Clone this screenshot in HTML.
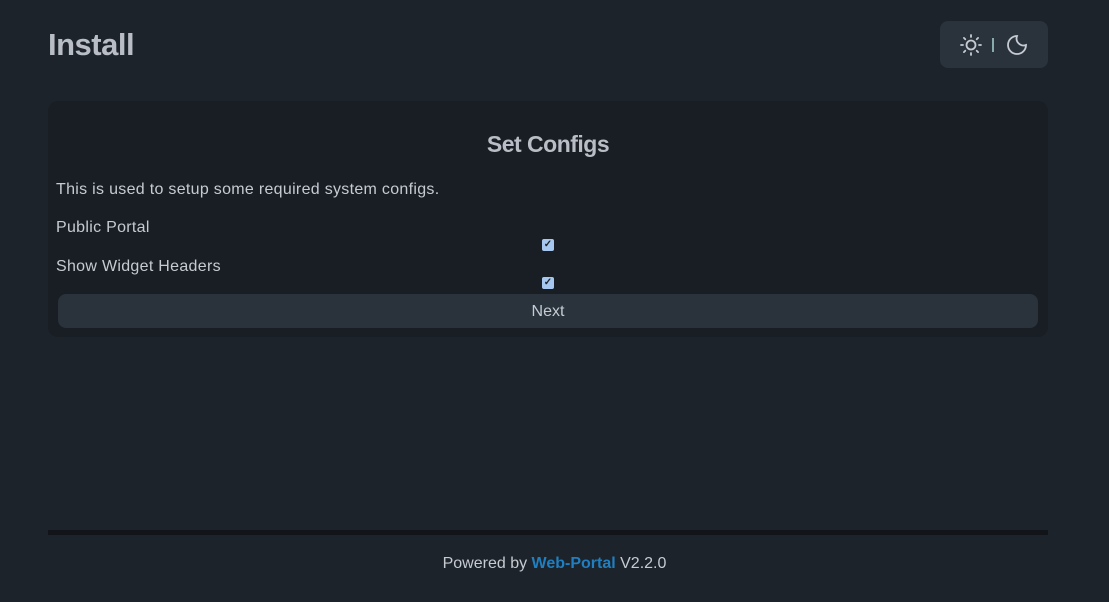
<!DOCTYPE html>
<html><head><style>
body{margin:0;background:#1d232a;width:1109px;height:602px;overflow:hidden;font-family:"Liberation Sans",sans-serif;color:#c6cbd2;position:relative}
h1{position:absolute;left:48px;top:27px;margin:0;font-size:31px;font-weight:bold;color:#b9bec6;letter-spacing:-0.5px}
.tog{position:absolute;left:940px;top:21px;width:108px;height:47px;background:#2a323c;border-radius:8px}
.card{position:absolute;left:48px;top:101px;width:1000px;height:236px;background:#191e24;border-radius:10px}
.t{position:absolute;left:0;width:1000px;text-align:center;top:30px;font-size:23px;font-weight:bold;color:#b9bec6;letter-spacing:-0.5px}
.p{position:absolute;left:8px;font-size:16px;color:#c6cbd2;letter-spacing:0.3px}
.cb{position:absolute;left:494px;width:12px;height:12px;background:#a6c8f0;border-radius:2px;color:#1d232a;font-size:10px;line-height:12px;text-align:center;font-weight:bold}
.btn{position:absolute;left:10px;top:193px;width:980px;height:34px;background:#2a323c;border-radius:8px;text-align:center;line-height:36px;font-size:16px;color:#c6cbd2}
.hr{position:absolute;left:48px;top:530px;width:1000px;height:5px;background:#111418}
.f{position:absolute;top:555px;left:0;width:1109px;text-align:center;font-size:16px;color:#c6cbd2}
</style></head><body>
<h1>Install</h1>
<div class="tog">
<svg style="position:absolute;left:19px;top:12px" width="24" height="24" viewBox="0 0 24 24" fill="none" stroke="#c6cbd2" stroke-width="1.8" stroke-linecap="round"><circle cx="12" cy="12" r="4.5"/><path d="M12 2v2M12 20v2M2 12h2M20 12h2M4.9 4.9l1.4 1.4M17.7 17.7l1.4 1.4M4.9 19.1l1.4-1.4M17.7 6.3l1.4-1.4"/></svg>
<div style="position:absolute;left:52px;top:17px;width:2px;height:14px;background:#8aa"></div>
<svg style="position:absolute;left:65px;top:12px" width="24" height="24" viewBox="0 0 24 24" fill="none" stroke="#c6cbd2" stroke-width="1.8"><path d="M12 3a7 7 0 0 0 9 9 9 9 0 1 1-9-9z"/></svg>
</div>
<div class="card">
<div class="t">Set Configs</div>
<div class="p" style="top:80px">This is used to setup some required system configs.</div>
<div class="p" style="top:118px">Public Portal</div>
<div class="cb" style="top:138px">✓</div>
<div class="p" style="top:157px">Show Widget Headers</div>
<div class="cb" style="top:176px">✓</div>
<div class="btn">Next</div>
</div>
<div class="hr"></div>
<div class="f">Powered by <b style="color:#1f7fc0">Web-Portal</b> V2.2.0</div>
</body></html>
